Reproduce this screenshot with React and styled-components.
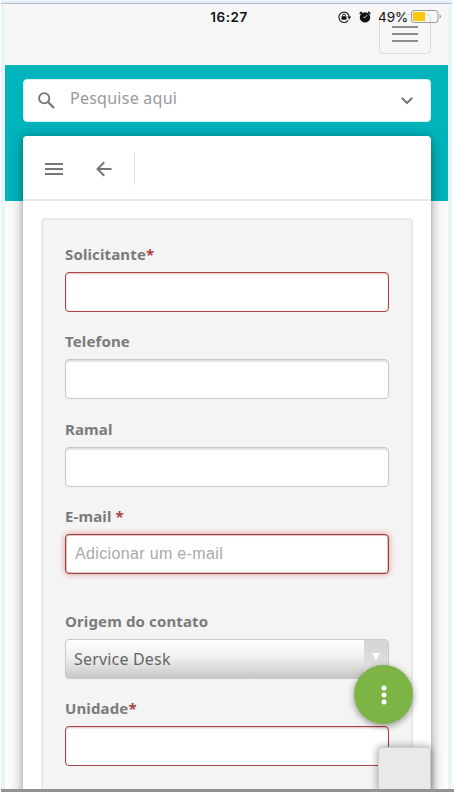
import React from 'react';
import styled, { createGlobalStyle, css } from 'styled-components';

const GlobalStyle = createGlobalStyle`
  * { box-sizing: border-box; }
  html, body { margin: 0; padding: 0; background: #fff; overflow: hidden; }
  body { font-family: "Noto Sans", "Open Sans", sans-serif; }
  button, input { font: inherit; }
`;

const Screen = styled.div`
  position: relative;
  width: 454px;
  height: 792px;
  overflow: hidden;
  padding: 3px 6px 0 5px;
  background: linear-gradient(90deg, #fff 1px, #eaf3f8 1px, #eaf3f8 452px, #fff 452px);
`;

const TopRule = styled.div`
  position: absolute;
  top: 0;
  left: 1px;
  width: 451px;
  height: 4px;
  background: linear-gradient(#f5f9fc 0 1px, #e2edf6 1px 3px, #afbfd1 3px);
`;

const Page = styled.div`
  display: flex;
  flex-direction: column;
  height: 786px;
  background: #fcfcfc;
  overflow: hidden;
`;

const Header = styled.header`
  position: relative;
  flex: none;
  display: flex;
  justify-content: flex-end;
  align-items: flex-start;
  height: 62px;
  padding: 11px 17px 0 0;
  background: #f7f7f8;
`;

const NavToggle = styled.button`
  display: flex;
  flex-direction: column;
  align-items: center;
  gap: 5px;
  width: 52px;
  height: 40px;
  padding: 11px 0 0;
  border: 1px solid #dcdcdd;
  border-radius: 4px;
  background: transparent;
`;

const NavBar = styled.span`
  width: 26px;
  height: 2px;
  background: #8d8d8e;
`;

const StatusBar = styled.div`
  position: absolute;
  inset: 0 0 auto 0;
  display: grid;
  grid-template-columns: 1fr auto 1fr;
  align-items: center;
  height: 27px;
  padding-right: 6px;
  font-family: Inter, "Liberation Sans", sans-serif;
  color: #111;
`;

const Clock = styled.span`
  grid-column: 2;
  margin-left: 11px;
  font-size: 13.5px;
  font-weight: 600;
  letter-spacing: 0.5px;
`;

const StatusIcons = styled.div`
  display: flex;
  justify-content: flex-end;
  align-items: center;
`;

const Percent = styled.span`
  width: 33px;
  margin-left: 7px;
  font-size: 13.5px;
  letter-spacing: 0;
  white-space: nowrap;
`;

const Glyph = styled.svg`
  flex: none;
  display: block;
  overflow: visible;
  width: ${p => p.$w}px;
  height: ${p => p.$h}px;
  margin-left: ${p => p.$left || 0}px;
`;

const Body = styled.main`
  flex: 1;
  min-height: 0;
  padding: 14px 17px 0 19px;
  background: linear-gradient(#00b4bc 136px, #fcfcfc 136px);
`;

const SearchBox = styled.div`
  display: flex;
  align-items: center;
  width: 408px;
  height: 43px;
  margin-left: -1px;
  padding: 0 17px 0 14px;
  border: 1px solid #d5f1f2;
  border-radius: 4px;
  background: #fff;
`;

const SearchText = styled.span`
  flex: 1;
  padding: 0 0 5px 15px;
  font-size: 16px;
  letter-spacing: 0.25px;
  color: #999;
`;

const Card = styled.section`
  width: 408px;
  height: 700px;
  margin: 14px 0 0 -1px;
  border-radius: 4px 4px 0 0;
  background: #fff;
  box-shadow: 0 3px 14px rgba(0, 0, 0, 0.36), 0 0 4px rgba(0, 0, 0, 0.12);
`;

const Toolbar = styled.div`
  display: flex;
  align-items: center;
  height: 65px;
  padding: 2px 0 0 22px;
  border-bottom: 2px solid #e8e8e8;
`;

const Divider = styled.span`
  width: 1px;
  height: 33px;
  margin-left: 22px;
  background: #ddd;
`;

const FormPanel = styled.form`
  width: 372px;
  height: 640px;
  margin: 17px 0 0 18px;
  padding: 24px 22px 0;
  border: 2px solid #e9e9e9;
  border-radius: 4px;
  background: #f4f4f4;
`;

const Field = styled.div`
  height: ${p => p.$height || 87.3}px;
`;

const Label = styled.label`
  display: block;
  height: 28px;
  line-height: 21px;
  font-size: 15px;
  font-weight: 700;
  letter-spacing: 0.13px;
  color: #7b7b7b;
`;

const Required = styled.span`
  color: #a94442;
`;

const Input = styled.input`
  display: block;
  width: 324px;
  height: 40px;
  padding: 0 9px;
  border: 1px solid #c8c8c8;
  border-radius: 4px;
  outline: none;
  background: #fff;
  box-shadow: inset 0 2px 1px rgba(0, 0, 0, 0.12);
  font-family: "Liberation Sans", Arial, sans-serif;
  font-size: 16px;
  letter-spacing: 0.35px;
  &::placeholder { color: #aaa; opacity: 1; }
  ${p => p.$invalid && css`
    border-color: #a94442;
    box-shadow: inset 0 1px 2px rgba(169, 68, 66, 0.35);
  `}
  ${p => p.$focused && css`
    border: 1px solid #9b4145;
    box-shadow: inset 0 0 1px 0.5px rgba(155, 65, 69, 0.6), 0 0 6px #df9693;
  `}
`;

const Select = styled.div`
  display: flex;
  justify-content: space-between;
  width: 324px;
  height: 40px;
  border: 1px solid #c9c9c9;
  border-radius: 4px;
  overflow: hidden;
  background: linear-gradient(#fff, #f0f0f0 45%, #c8c8c8);
`;

const SelectValue = styled.span`
  padding-left: 8px;
  font-size: 16px;
  line-height: 38px;
  letter-spacing: 0.18px;
  color: #666;
`;

const SelectArrow = styled.span`
  width: 24px;
  padding: 13px 0 0 8px;
  background: linear-gradient(#d4d4d4, #e5e5e5);
`;

const ActionButton = styled.button`
  position: absolute;
  left: 354px;
  top: 665px;
  display: flex;
  align-items: center;
  justify-content: center;
  width: 59px;
  height: 59px;
  padding: 0;
  border: 0;
  border-radius: 50%;
  background: #7cb546;
  box-shadow: 0 2px 7px rgba(0, 0, 0, 0.42);
`;

const CornerTab = styled.div`
  position: absolute;
  left: 378px;
  top: 747px;
  width: 53px;
  height: 45px;
  border: 1px solid #cecece;
  border-radius: 4px 4px 0 0;
  background: #e9e9e9;
  box-shadow: 0 0 8px rgba(0, 0, 0, 0.4);
`;

const BottomRule = styled.div`
  position: absolute;
  left: 1px;
  right: 0;
  bottom: 0;
  height: 3px;
  background: #929292;
`;

function TextField({ label, required, height, ...input }) {
  return (
    <Field $height={height}>
      <Label>{label}{required && <Required>*</Required>}</Label>
      <Input {...input} />
    </Field>
  );
}

function RotationLockIcon() {
  return (
    <Glyph $w={13} $h={12} viewBox="0 0 13 12" fill="none" stroke="#111">
      <path d="M10.2 9.4A5.2 5.2 0 1 1 11.2 5.6" strokeWidth="1.1" />
      <path d="M9.2 5.6h4L11.2 8.4z" fill="#111" stroke="none" />
      <path d="M4.6 5.6V4.4a1.4 1.4 0 0 1 2.8 0V5.6" strokeWidth="1" />
      <rect x="3.5" y="5.2" width="5" height="3.5" rx=".5" fill="#111" stroke="none" />
    </Glyph>
  );
}

function AlarmIcon() {
  return (
    <Glyph $w={12} $h={12} $left={8} viewBox="0 0 12 12" fill="none" stroke="#111">
      <circle cx="6" cy="6.4" r="5.2" fill="#111" stroke="none" />
      <path d="M.7 2.8 2.9 1M11.3 2.8 9.1 1" strokeWidth="1.7" />
      <path d="M8.1 4.2 6 6.5 4.6 6.3" stroke="#fff" strokeWidth=".9" />
    </Glyph>
  );
}

function BatteryIcon() {
  return (
    <Glyph $w={31} $h={13} viewBox="0 0 31 13">
      <rect x=".5" y=".5" width="26.5" height="12" rx="2.5" fill="none" stroke="#999" />
      <rect x="2" y="2" width="12" height="9" rx=".5" fill="#fdc70c" />
      <path d="M28.6 4.5q3 2 0 4z" fill="#999" />
    </Glyph>
  );
}

export default function App() {
  return (
    <>
      <GlobalStyle />
      <Screen>
        <Page>
          <Header>
            <NavToggle type="button" aria-label="Menu"><NavBar /><NavBar /><NavBar /></NavToggle>
            <StatusBar>
              <Clock>16:27</Clock>
              <StatusIcons>
                <RotationLockIcon />
                <AlarmIcon />
                <Percent>49%</Percent>
                <BatteryIcon />
              </StatusIcons>
            </StatusBar>
          </Header>
          <Body>
            <SearchBox>
              <Glyph $w={17} $h={17} viewBox="0 0 17 17" fill="none" stroke="#777">
                <circle cx="6.2" cy="6.2" r="5.1" strokeWidth="1.9" />
                <path d="m10 10 6 6" strokeWidth="2.4" />
              </Glyph>
              <SearchText>Pesquise aqui</SearchText>
              <Glyph $w={12} $h={8} viewBox="0 0 12 8" fill="none" stroke="#777" strokeWidth="2">
                <path d="m.8.8 5.2 5.2L11.2.8" />
              </Glyph>
            </SearchBox>
            <Card>
              <Toolbar>
                <Glyph $w={18} $h={12} viewBox="0 0 18 12" stroke="#777" strokeWidth="2">
                  <path d="M0 1h18M0 6h18M0 11h18" />
                </Glyph>
                <Glyph $w={16} $h={16} $left={33} viewBox="0 0 16 16" fill="none" stroke="#777" strokeWidth="2">
                  <path d="M15.5 8H1.5M8.2 1.2 1.5 8l6.7 6.8" />
                </Glyph>
                <Divider />
              </Toolbar>
              <FormPanel>
                <TextField label="Solicitante" required $invalid />
                <TextField label="Telefone" />
                <TextField label="Ramal" />
                <TextField label="E-mail " required height={105} placeholder="Adicionar um e-mail" $invalid $focused />
                <Field>
                  <Label>Origem do contato</Label>
                  <Select>
                    <SelectValue>Service Desk</SelectValue>
                    <SelectArrow>
                      <Glyph $w={8} $h={8} viewBox="0 0 8 8"><path d="M0 0h8L4 8z" fill="#fff" /></Glyph>
                    </SelectArrow>
                  </Select>
                </Field>
                <TextField label="Unidade" required $invalid />
              </FormPanel>
            </Card>
          </Body>
        </Page>
        <TopRule />
        <ActionButton type="button" aria-label="Mais opções">
          <Glyph $w={6} $h={20} viewBox="0 0 6 20" fill="#fff">
            <circle cx="3" cy="3" r="2.5" /><circle cx="3" cy="10" r="2.5" /><circle cx="3" cy="17" r="2.5" />
          </Glyph>
        </ActionButton>
        <CornerTab />
        <BottomRule />
      </Screen>
    </>
  );
}
